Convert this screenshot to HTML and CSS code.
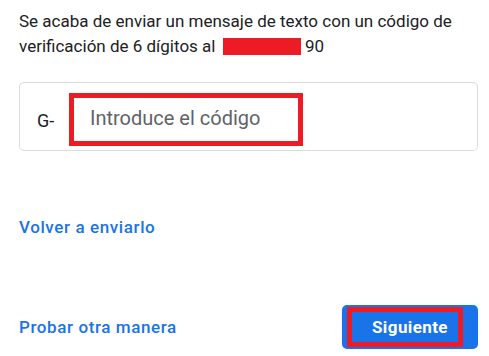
FILE: index.html
```html
<!DOCTYPE html>
<html lang="es">
<head>
    <meta charset="UTF-8">
    <meta name="viewport" content="width=device-width, initial-scale=1.0">
    <title>Verificación</title>
    <link rel="stylesheet" href="styles.css">
</head>
<body>
    <div class="page">
        <p class="intro">
            Se acaba de enviar un mensaje de texto con un código de<br>
            verificación de 6 dígitos al <span class="redacted"></span> 90
        </p>

        <!-- Code field -->
        <div class="code-box">
            <span class="prefix">G-</span>
            <input type="text" class="code-input" placeholder="Introduce el código">
        </div>

        <a class="link resend" href="#">Volver a enviarlo</a>

        <div class="actions">
            <a class="link" href="#">Probar otra manera</a>
            <button class="next-button"><span class="mark">Siguiente</span></button>
        </div>
    </div>
</body>
</html>
```

FILE: styles.css
```css
* {
    margin: 0;
    padding: 0;
    box-sizing: border-box;
}

body {
    background-color: #fff;
    font-family: Roboto, 'Liberation Sans', sans-serif;
    color: #202124;
}

.page {
    width: 459px;
    margin-left: 19px;
    padding-top: 9px;
}

.intro {
    font-size: 17px;
    line-height: 25px;
    white-space: nowrap;
}

.redacted {
    display: inline-block;
    width: 78px;
    height: 17px;
    margin-left: 3px;
    background-color: #ed1c24;
    vertical-align: -3px;
}

.code-box {
    display: flex;
    align-items: center;
    margin-top: 23px;
    height: 69px;
    padding: 10px 0 4px 17px;
    border: 1px solid #dadce0;
    border-radius: 5px;
}

.prefix {
    font-size: 18px;
    width: 32px;
    margin-top: 2px;
}

.code-input {
    width: 234px;
    height: 53px;
    align-self: flex-start;
    border: 5px solid #ed1c24;
    padding: 0 16px 4px;
    font-family: Roboto, 'Liberation Sans', sans-serif;
    font-size: 20px;
    color: #202124;
    outline: none;
}

.code-input::placeholder {
    color: #5f6368;
}

.link {
    color: #1a73e8;
    text-decoration: none;
    font-size: 17px;
    font-weight: 500;
    letter-spacing: 0.6px;
    line-height: 20px;
}

.resend {
    display: block;
    margin-top: 66px;
}

.actions {
    display: flex;
    justify-content: space-between;
    align-items: center;
    margin-top: 68px;
}

.next-button {
    display: flex;
    width: 136px;
    height: 44px;
    padding: 2px 15px 2px 5px;
    background-color: #1a73e8;
    border: none;
    border-radius: 5px;
    cursor: pointer;
}

.mark {
    flex: 1;
    display: flex;
    align-items: center;
    padding-left: 20px;
    border: 5px solid #ed1c24;
    color: #fff;
    font-family: Roboto, 'Liberation Sans', sans-serif;
    font-size: 17px;
    font-weight: 700;
    letter-spacing: 0.4px;
}
```
